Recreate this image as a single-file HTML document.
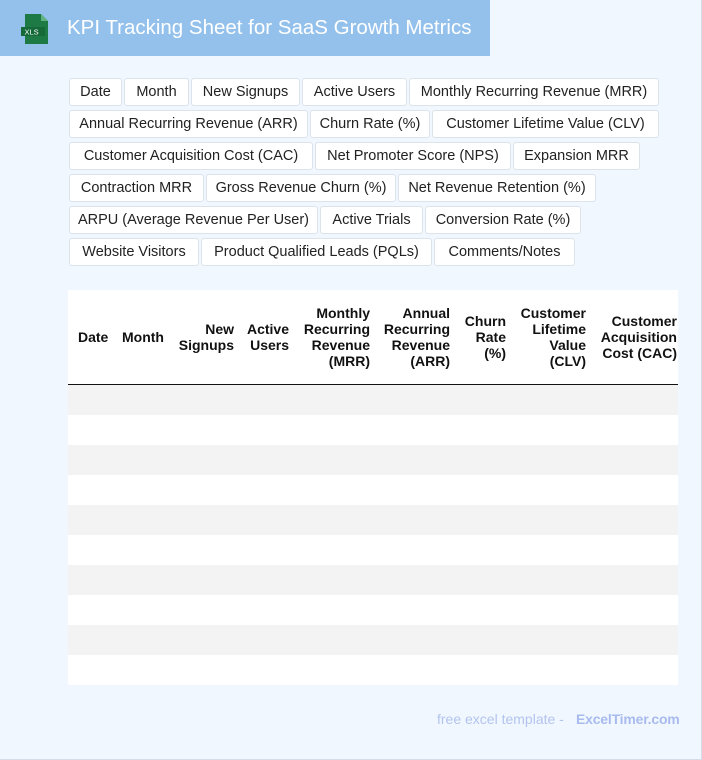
<!DOCTYPE html><html><head><style>
body{margin:0;width:702px;height:760px;background:#fff;font-family:"Liberation Sans",Arial,sans-serif;overflow:hidden}
.pg{position:absolute;left:0;top:0;width:701px;height:759px;background:#f0f7ff;border-right:1px solid #d5dde8;border-bottom:1px solid #d5dde8}
.hd{position:absolute;left:0;top:0;width:490px;height:56px;background:#93c1ec}
.hd .t{position:absolute;left:67px;top:16px;color:#fff;font-size:20.5px}
.tag{position:absolute;height:26px;border:1px solid #dde3ea;border-radius:3px;background:#fff;font-size:14.5px;line-height:27px;text-align:center;color:#222;box-sizing:content-box}
.tb{position:absolute;left:68px;top:290px;width:610px;height:395px;background:#fff}
.h{position:absolute;font-weight:bold;font-size:14px;line-height:16px;color:#111;text-align:right}
.r{position:absolute;left:0;width:610px;height:30px;background:#f3f3f3}
</style></head><body><div class="pg">
<div class="hd">
<svg style="position:absolute;left:20px;top:14px" width="30" height="30" viewBox="0 0 30 30"><path d="M5 0h16l7 7v23H5z" fill="#1d7a45"/><path d="M21 0v7h7z" fill="#5fb380"/><rect x="1" y="13" width="24" height="9" fill="#166a3a"/><text x="4.5" y="20.5" font-size="7.5" fill="#fff" font-family="Liberation Sans">XLS</text></svg>
<div class="t">KPI Tracking Sheet for SaaS Growth Metrics</div></div>

<div class="tag" style="left:69px;top:78px;width:51px">Date</div>
<div class="tag" style="left:124px;top:78px;width:63px">Month</div>
<div class="tag" style="left:191px;top:78px;width:107px">New Signups</div>
<div class="tag" style="left:302px;top:78px;width:103px">Active Users</div>
<div class="tag" style="left:409px;top:78px;width:248px">Monthly Recurring Revenue (MRR)</div>
<div class="tag" style="left:69px;top:110px;width:237px">Annual Recurring Revenue (ARR)</div>
<div class="tag" style="left:310px;top:110px;width:118px">Churn Rate (%)</div>
<div class="tag" style="left:432px;top:110px;width:225px">Customer Lifetime Value (CLV)</div>
<div class="tag" style="left:69px;top:142px;width:242px">Customer Acquisition Cost (CAC)</div>
<div class="tag" style="left:315px;top:142px;width:194px">Net Promoter Score (NPS)</div>
<div class="tag" style="left:513px;top:142px;width:125px">Expansion MRR</div>
<div class="tag" style="left:69px;top:174px;width:133px">Contraction MRR</div>
<div class="tag" style="left:206px;top:174px;width:188px">Gross Revenue Churn (%)</div>
<div class="tag" style="left:398px;top:174px;width:196px">Net Revenue Retention (%)</div>
<div class="tag" style="left:69px;top:206px;width:247px">ARPU (Average Revenue Per User)</div>
<div class="tag" style="left:320px;top:206px;width:101px">Active Trials</div>
<div class="tag" style="left:425px;top:206px;width:154px">Conversion Rate (%)</div>
<div class="tag" style="left:69px;top:238px;width:128px">Website Visitors</div>
<div class="tag" style="left:201px;top:238px;width:229px">Product Qualified Leads (PQLs)</div>
<div class="tag" style="left:434px;top:238px;width:139px">Comments/Notes</div>

<div class="tb">
<div class="h" style="left:10px;top:39px;text-align:left">Date</div>
<div class="h" style="left:54px;top:39px;text-align:left">Month</div>
<div class="h" style="right:444px;top:31px">New<br>Signups</div>
<div class="h" style="right:389px;top:31px">Active<br>Users</div>
<div class="h" style="right:308px;top:15px">Monthly<br>Recurring<br>Revenue<br>(MRR)</div>
<div class="h" style="right:228px;top:15px">Annual<br>Recurring<br>Revenue<br>(ARR)</div>
<div class="h" style="right:172px;top:23px">Churn<br>Rate<br>(%)</div>
<div class="h" style="right:92px;top:15px">Customer<br>Lifetime<br>Value<br>(CLV)</div>
<div class="h" style="right:1px;top:23px">Customer<br>Acquisition<br>Cost (CAC)</div>
<div style="position:absolute;left:0;top:94px;width:610px;height:1px;background:#111"></div>
<div class="r" style="top:95px"></div><div class="r" style="top:155px"></div><div class="r" style="top:215px"></div><div class="r" style="top:275px"></div><div class="r" style="top:335px"></div>
</div>
<div style="position:absolute;left:437px;top:711px;font-size:14px;color:#b3c4ee">free excel template -</div>
<div style="position:absolute;left:576px;top:711px;font-size:14px;color:#a9bbee;font-weight:bold;letter-spacing:-0.2px">ExcelTimer.com</div>
</div></body></html>
